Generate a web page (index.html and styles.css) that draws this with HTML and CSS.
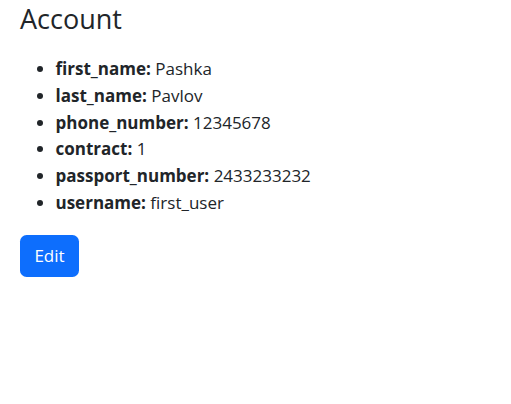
FILE: index.html
```html
<!DOCTYPE html>
<html>
<head>
<meta charset="utf-8">
<link rel="stylesheet" href="styles.css">
</head>
<body>
<div class="container">
  <h2 class="title">Account</h2>
  <ul class="fields">
    <li><b>first_name:</b> Pashka</li>
    <li><b>last_name:</b> Pavlov</li>
    <li><b>phone_number:</b> 12345678</li>
    <li><b>contract:</b> 1</li>
    <li><b>passport_number:</b> 2433233232</li>
    <li><b>username:</b> first_user</li>
  </ul>
  <button class="btn">Edit</button>
</div>
</body>
</html>
```

FILE: styles.css
```css
html, body {
  margin: 0;
  padding: 0;
  background: #fff;
}
body {
  font-family: "Open Sans", "Noto Sans", sans-serif;
  font-size: 17px;
  line-height: 26.8px;
  color: #212529;
}
.container {
  padding: 0 20px;
}
.title {
  margin: 0;
  font-size: 27px;
  font-weight: 500;
  line-height: 37px;
}
.fields {
  margin: 19px 0 18px;
  padding-left: 35.5px;
}
.fields b {
  font-weight: 700;
}
.btn {
  display: inline-flex;
  align-items: center;
  justify-content: center;
  width: 59px;
  height: 42px;
  padding: 0;
  border: 0;
  border-radius: 6.6px;
  background: #0d6efd;
  color: #fff;
  font-family: inherit;
  font-size: 17px;
}
```
